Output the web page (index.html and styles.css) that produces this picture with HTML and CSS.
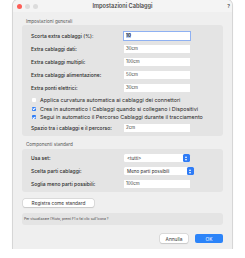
FILE: index.html
```html
<!DOCTYPE html>
<html lang="it">

<head>
  <meta charset="UTF-8" />
  <meta name="viewport" content="width=device-width, initial-scale=1.0" />
  <title>Impostazioni Cablaggi</title>
  <link rel="stylesheet" href="styles.css">
</head>

<body>
  <!-- Dialog window -->
  <div class="window">
    <div class="titlebar">
      <div class="lights">
        <span class="light red"></span>
        <span class="light"></span>
        <span class="light"></span>
      </div>
      <div class="title">Impostazioni Cablaggi</div>
      <div class="help-mark">?</div>
    </div>

    <div class="content">
      <!-- General settings -->
      <div class="group-label">Impostazioni generali</div>
      <div class="group general">
        <div class="row">
          <label>Scorta extra cablaggi (%):</label>
          <div class="field focus"><span class="sel">10</span></div>
        </div>
        <div class="row">
          <label>Extra cablaggi dati:</label>
          <div class="field">30cm</div>
        </div>
        <div class="row">
          <label>Extra cablaggi multipli:</label>
          <div class="field">100cm</div>
        </div>
        <div class="row">
          <label>Extra cablaggi alimentazione:</label>
          <div class="field">50cm</div>
        </div>
        <div class="row">
          <label>Extra ponti elettrici:</label>
          <div class="field">30cm</div>
        </div>

        <div class="checks">
          <div class="check"><span class="box"></span>Applica curvatura automatica ai cablaggi dei connettori</div>
          <div class="check"><span class="box on"></span>Crea in automatico i Cablaggi quando si collegano i Dispositivi</div>
          <div class="check"><span class="box on"></span>Segui in automatico il Percorso Cablaggi durante il tracciamento</div>
        </div>

        <div class="row">
          <label>Spazio tra i cablaggi e il percorso:</label>
          <div class="field">2cm</div>
        </div>
      </div>

      <!-- Standard components -->
      <div class="group-label">Componenti standard</div>
      <div class="group standard">
        <div class="row">
          <label>Usa set:</label>
          <div class="select"><span>&lt;tutti&gt;</span><span class="stepper"></span></div>
        </div>
        <div class="row">
          <label>Scelta parti cablaggi:</label>
          <div class="select wide"><span>Meno parti possibili</span><span class="stepper"></span></div>
        </div>
        <div class="row">
          <label>Soglia meno parti possibili:</label>
          <div class="field">100cm</div>
        </div>
      </div>

      <button class="btn save">Registra come standard</button>

      <div class="hint">Per visualizzare l'Aiuto, premi F1 o fai clic sull'icona ?</div>

      <div class="actions">
        <button class="btn">Annulla</button>
        <button class="btn primary">OK</button>
      </div>
    </div>
  </div>
</body>

</html>
```

FILE: styles.css
```css
body {
  margin: 0;
  background: #fff;
  font-family: Inter, "Liberation Sans", sans-serif;
  color: #2a2a2a;
}

.window {
  margin-left: 13px;
  width: 219px;
  height: 249px;
  background: #efefef;
  border-radius: 5px 5px 0 0;
  box-shadow: 0 0 0 1px #d6d6d6, 0 1px 2px rgba(0, 0, 0, 0.15);
  overflow: hidden;
}

.titlebar {
  height: 12px;
  display: flex;
  align-items: center;
  position: relative;
  background: #f4f4f4;
}

.lights {
  display: flex;
  gap: 3px;
  margin-left: 4px;
}

.light {
  width: 5px;
  height: 5px;
  border-radius: 50%;
  background: #dcdcdc;
}

.light.red {
  background: #fd5e57;
}

.title {
  position: absolute;
  left: 0;
  right: 0;
  text-align: center;
  font-size: 5.6px;
  font-weight: 600;
  color: #4a4a4a;
}

.help-mark {
  margin-left: auto;
  margin-right: 2px;
  font-size: 5px;
  font-weight: 700;
  color: #555;
}

.content {
  padding: 0 9px;
}

.group-label {
  font-size: 4.6px;
  color: #555;
  padding-left: 4px;
  height: 6px;
  line-height: 6px;
  margin-top: 7px;
}

.group {
  background: #e4e4e4;
  border-radius: 3px;
  padding: 7px 9px 4px;
  display: flex;
  flex-direction: column;
  gap: 5px;
}

.standard {
  margin-top: 1px;
  padding-top: 5px;
}

.general + .group-label {
  margin-top: 6px;
}

.row {
  display: flex;
  align-items: center;
  height: 8px;
}

.row label {
  width: 93px;
  font-size: 5px;
  font-weight: 500;
  color: #2a2a2a;
}

.field {
  width: 66px;
  height: 8px;
  box-sizing: border-box;
  background: #fff;
  font-size: 4.4px;
  line-height: 8px;
  padding-left: 2px;
  color: #333;
}

.field.focus {
  box-shadow: 0 0 0 1px #8fb1f2;
  font-weight: 700;
}

.sel {
  background: #b4cdf6;
}

.checks {
  display: flex;
  flex-direction: column;
  margin: -1px 0 -2.5px;
}

.check {
  display: flex;
  align-items: center;
  height: 8.5px;
  font-size: 5.4px;
  padding-left: 1px;
  color: #2a2a2a;
}

.box {
  width: 4px;
  height: 4px;
  border-radius: 1px;
  background: #fff;
  margin-right: 4px;
  position: relative;
  flex-shrink: 0;
}

.box.on {
  background: #2e7cf6;
}

.box.on::after {
  content: "";
  position: absolute;
  left: 1.3px;
  top: 0.3px;
  width: 1px;
  height: 2px;
  border: solid #fff;
  border-width: 0 0.7px 0.7px 0;
  transform: rotate(45deg);
}

.select {
  width: 66px;
  height: 8px;
  display: flex;
  align-items: center;
  justify-content: space-between;
  background: #fff;
  font-size: 4.6px;
  padding-left: 3px;
  box-sizing: border-box;
  border-radius: 1.5px;
}

.select.wide {
  width: 70px;
}

.stepper {
  width: 7px;
  height: 8px;
  border-radius: 1.5px;
  background: #2f7cf6;
  position: relative;
}

.stepper::before,
.stepper::after {
  content: "";
  position: absolute;
  left: 2px;
  border-left: 1.5px solid transparent;
  border-right: 1.5px solid transparent;
}

.stepper::before {
  top: 1.5px;
  border-bottom: 2px solid #fff;
}

.stepper::after {
  bottom: 1.5px;
  border-top: 2px solid #fff;
}

.btn {
  font-family: inherit;
  font-size: 4.8px;
  height: 9px;
  padding: 0 6px;
  border: none;
  border-radius: 2px;
  background: #fff;
  color: #333;
  box-shadow: 0 0 0 0.5px #c8c8c8, 0 0.5px 1px rgba(0, 0, 0, 0.15);
}

.save {
  display: block;
  margin: 7px 0 0 1px;
  width: 71px;
  height: 8px;
  padding: 0;
}

.hint {
  margin-top: 6px;
  height: 12px;
  line-height: 12px;
  background: #e4e4e4;
  border-radius: 3px;
  font-size: 3.4px;
  padding-left: 2px;
  color: #444;
}

.actions {
  display: flex;
  justify-content: flex-end;
  gap: 7px;
  margin-top: 9px;
}

.actions .btn {
  width: 28px;
  padding: 0;
}

.primary {
  width: 29px;
  background: #2c84f9;
  color: #fff;
  box-shadow: none;
}
```
